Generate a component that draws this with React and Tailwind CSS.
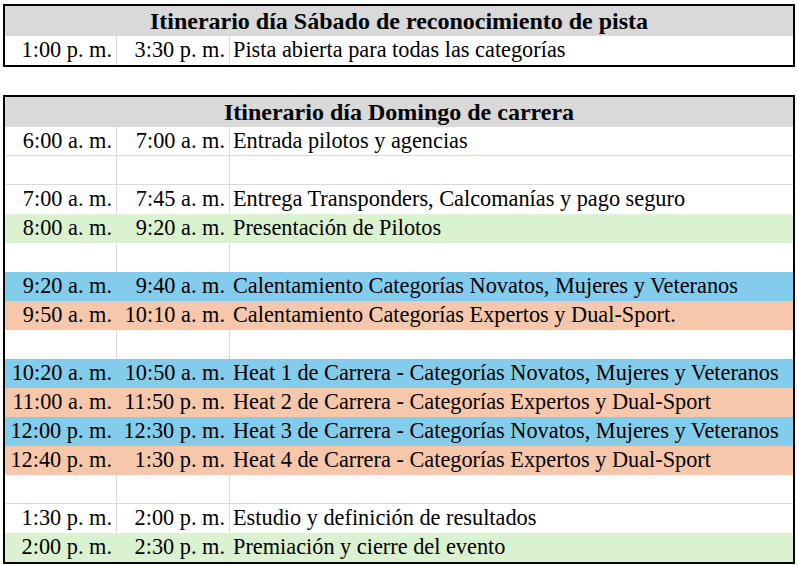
import React from 'react';

const COLORS = {
    white: 'bg-white',
    green: 'bg-[#daf2d0]',
    blue: 'bg-[#83cceb]',
    orange: 'bg-[#f7c7ac]',
};

const saturday = [
    { start: '1:00 p. m.', end: '3:30 p. m.', text: 'Pista abierta para todas las categorías', color: 'white' },
];

const sunday = [
    { start: '6:00 a. m.', end: '7:00 a. m.', text: 'Entrada pilotos y agencias', color: 'white' },
    { color: 'white' },
    { start: '7:00 a. m.', end: '7:45 a. m.', text: 'Entrega Transponders, Calcomanías y pago seguro', color: 'white' },
    { start: '8:00 a. m.', end: '9:20 a. m.', text: 'Presentación de Pilotos', color: 'green' },
    { color: 'white' },
    { start: '9:20 a. m.', end: '9:40 a. m.', text: 'Calentamiento Categorías Novatos, Mujeres y Veteranos', color: 'blue' },
    { start: '9:50 a. m.', end: '10:10 a. m.', text: 'Calentamiento Categorías Expertos y Dual-Sport.', color: 'orange' },
    { color: 'white' },
    { start: '10:20 a. m.', end: '10:50 a. m.', text: 'Heat 1 de Carrera - Categorías Novatos, Mujeres y Veteranos', color: 'blue' },
    { start: '11:00 a. m.', end: '11:50 p. m.', text: 'Heat 2 de Carrera - Categorías Expertos y Dual-Sport', color: 'orange' },
    { start: '12:00 p. m.', end: '12:30 p. m.', text: 'Heat 3 de Carrera - Categorías Novatos, Mujeres y Veteranos', color: 'blue' },
    { start: '12:40 p. m.', end: '1:30 p. m.', text: 'Heat 4 de Carrera - Categorías Expertos y Dual-Sport', color: 'orange' },
    { color: 'white' },
    { start: '1:30 p. m.', end: '2:00 p. m.', text: 'Estudio y definición de resultados', color: 'white' },
    { start: '2:00 p. m.', end: '2:30 p. m.', text: 'Premiación y cierre del evento', color: 'green' },
];

// white cells show the sheet gridlines, filled cells hide them
const Row = ({ row, next }) => {
    const plain = row.color === 'white';
    const lineBelow = plain && next && next.color === 'white';
    const side = plain ? 'border-r border-[#dadada]' : 'border-r border-transparent';
    return (
        <div className={`flex h-[29px] ${COLORS[row.color]} ${lineBelow ? 'border-b border-[#dadada]' : ''}`}>
            <div className={`w-[112px] shrink-0 ${side} pr-[4px] flex items-center justify-end whitespace-nowrap`}>
                {row.start}
            </div>
            <div className={`w-[113px] shrink-0 ${side} pr-[4px] flex items-center justify-end whitespace-nowrap`}>
                {row.end}
            </div>
            <div className="flex-1 pl-[3px] flex items-center whitespace-nowrap">{row.text}</div>
        </div>
    );
};

const Schedule = ({ title, rows }) => (
    <div className="border-2 border-black">
        <div className="h-[30px] bg-[#d9d9d9] flex items-center justify-center font-bold text-[24px]">{title}</div>
        {rows.map((row, i) => (
            <Row key={i} row={row} next={rows[i + 1]} />
        ))}
    </div>
);

export default function App() {
    return (
        <div
            className="w-[797px] h-[565px] overflow-hidden bg-white text-black text-[22.3px] leading-none pt-[4px] pl-[3px] pr-[2px]"
            style={{ fontFamily: '"Liberation Serif", "Times New Roman", serif' }}
        >
            <Schedule title="Itinerario día Sábado de reconocimiento de pista" rows={saturday} />
            <div className="h-[28px]" />
            <Schedule title="Itinerario día Domingo de carrera" rows={sunday} />
            <div className="flex h-[4px]">
                <div className="w-[114px] shrink-0 border-r border-[#dadada]" />
                <div className="w-[113px] shrink-0 border-r border-[#dadada]" />
            </div>
        </div>
    );
}
